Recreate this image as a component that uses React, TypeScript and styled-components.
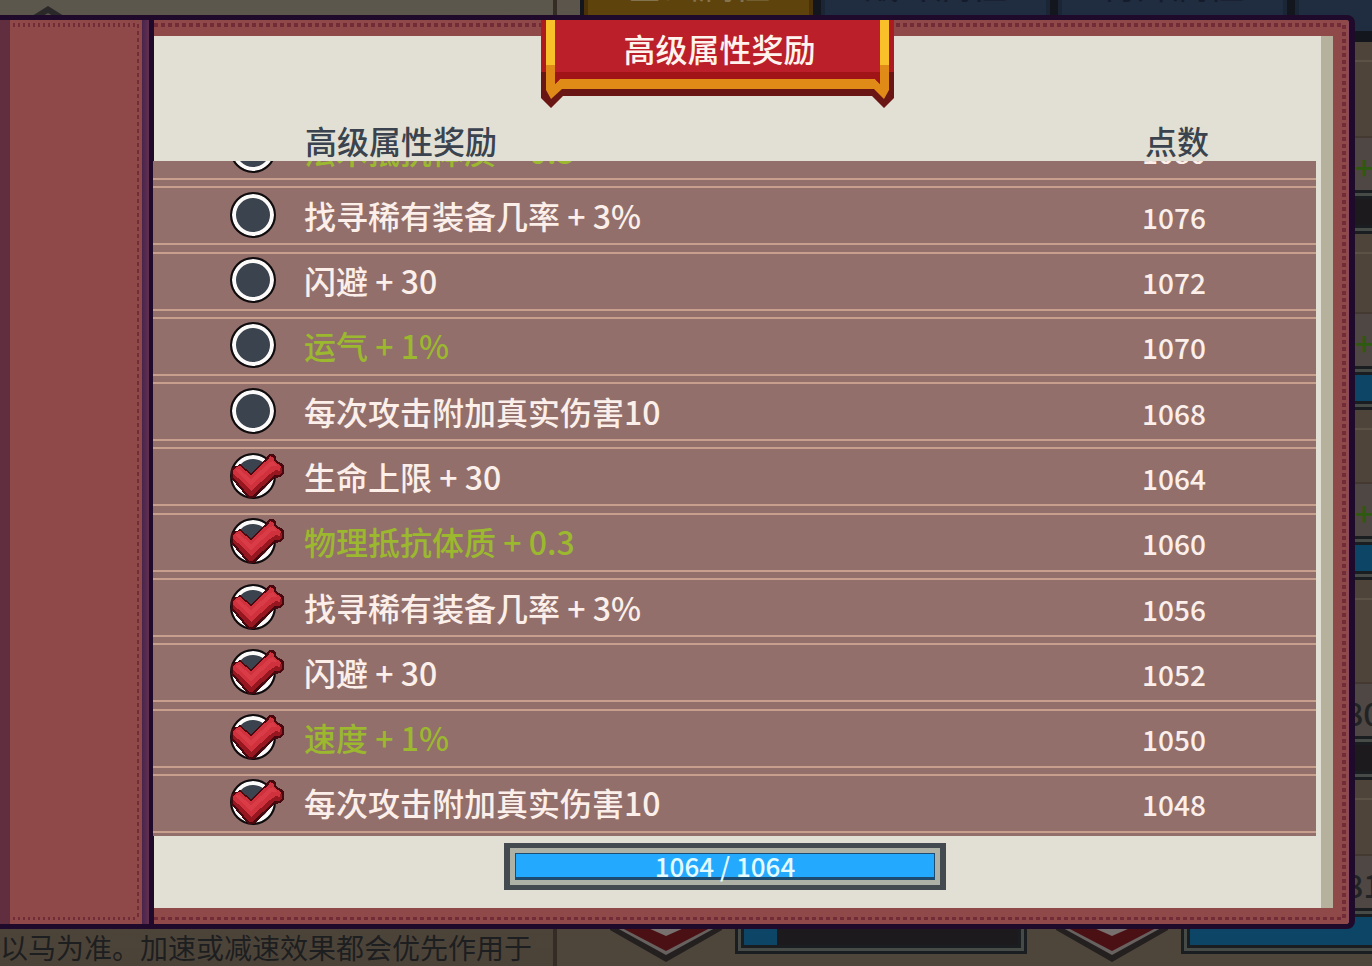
import React from "react";
import styled, { createGlobalStyle } from "styled-components";

const GlobalStyle = createGlobalStyle`
  *, *::before, *::after { box-sizing: border-box; }
  body {
    margin: 0;
    background: #4d443a;
    font-family: "Noto Sans CJK SC", "Noto Sans", sans-serif;
  }
  button { font-family: inherit; }
`;

const ink = "#1f0a2b";
const brick = "#8f4949";
const stitch = "#712c38";
const paper = "#e2e0d4";
const slate = "#3a434e";

/* ---------- dimmed screen behind the book ---------- */

const Root = styled.div`
  position: relative;
  min-height: 100vh;
  overflow: hidden;
`;

const Scene = styled.div`
  position: absolute;
  inset: 0;
  display: grid;
  grid-template-columns: 557px 1fr;
  overflow: hidden;
`;

const NotesPanel = styled.section`
  display: flex;
  flex-direction: column;
  justify-content: space-between;
  border-right: 4px solid #352c26;
  background: linear-gradient(#5c574d, #4c4338);
`;

const NotesArrow = styled.svg`
  display: block;
  margin: 6px 0 0 32px;
`;

const NotesText = styled.p`
  margin: 0;
  font-size: 28px;
  line-height: 38px;
  color: #1d1e20;
  white-space: nowrap;
`;

const StatsPanel = styled.section`
  display: flex;
  flex-direction: column;
  min-width: 0;
  background: #4f463b;
`;

const TabBar = styled.nav`
  display: flex;
  gap: 8px;
  height: 42px;
  padding: 0 0 11px 27px;
  background: #14161d;
  box-shadow: inset 23px 0 #5b554b;
`;

const Tab = styled.button<{ $active?: boolean }>`
  display: flex;
  align-items: flex-end;
  justify-content: center;
  flex: 0 0 229px;
  height: 31px;
  padding: 0 0 26px;
  border: 0;
  background: ${(p) => (p.$active ? "#5e430c" : "#202c3f")};
  color: ${(p) => (p.$active ? "#83744f" : "#151b2b")};
  font-size: 36px;
  line-height: 44px;
  box-shadow: inset 4px 0 ${(p) => (p.$active ? "#4c3209" : "#1a2535")},
    inset -4px 0 ${(p) => (p.$active ? "#4c3209" : "#1a2535")};
`;

const StatCard = styled.div<{ $gap: number }>`
  display: flex;
  flex-direction: column;
  flex: none;
  margin-right: -40px;
  padding-top: ${(p) => p.$gap}px;
  background: linear-gradient(#5d5246, #5d5246) 0 18px / 100% 2px no-repeat, #4f443a;
`;

const StatValue = styled.div`
  display: flex;
  justify-content: flex-end;
  height: 54px;
  overflow: hidden;
  border-top: 2px solid #443a32;
  background: #4f4743;
`;

const StatNumber = styled.span<{ $bonus?: boolean }>`
  width: ${(p) => (p.$bonus ? 57 : 67)}px;
  color: ${(p) => (p.$bonus ? "#2d5a10" : "#222324")};
  font-size: 32px;
  font-weight: 500;
  line-height: 56px;
  white-space: nowrap;
`;

const Meter = styled.div<{ $wide?: boolean }>`
  flex: ${(p) => (p.$wide ? "none" : "0 0 292px")};
  height: ${(p) => (p.$wide ? 44 : 46)}px;
  padding: 3px;
  border: 3px solid #1b1e20;
  background: #464b48;
`;

const MeterTrack = styled.div`
  height: 100%;
  border: 3px solid #1b1e20;
  background: #1c1a1c;
`;

const MeterFill = styled.div`
  height: 100%;
  background: #0d4567;
`;

const MeterRow = styled.div`
  display: flex;
  align-items: flex-start;
  padding-left: 53px;
`;

const MeterPair = styled.div`
  display: flex;
  flex: none;
  gap: 13px;
  margin-right: 29px;
`;

/* ---------- book ---------- */

const Book = styled.main`
  position: relative;
  display: flex;
  margin: 15px 17px 37px 0;
  border: solid ${ink};
  border-width: 5px 6px 5px 0;
  border-radius: 0 8px 8px 0;
  background: ${brick};
`;

const Spine = styled.div`
  flex: 0 0 154px;
  border-right: 5px solid ${ink};
  padding-right: 7px;
  background: linear-gradient(90deg, #49244c, #623050) right / 7px 100% no-repeat;
`;

const SpineCover = styled.div`
  height: 100%;
  border-left: 10px solid #612e40;
  background:
    repeating-linear-gradient(90deg, ${stitch} 0 2px, transparent 2px 5px) 3px 3px / 124px 4px no-repeat,
    repeating-linear-gradient(90deg, ${stitch} 0 2px, transparent 2px 5px) 3px calc(100% - 4px) / 124px 3px no-repeat,
    repeating-linear-gradient(${stitch} 0 4px, transparent 4px 7px) 127px 4px / 2px calc(100% - 8px) no-repeat,
    ${brick};
`;

const Cover = styled.div`
  flex: 1;
  min-width: 0;
  padding: 16px 16px 16px 0;
  border-radius: 0 4px 4px 0;
  background:
    repeating-linear-gradient(90deg, ${stitch} 0 4px, transparent 4px 7px) 0 3px / calc(100% - 6px) 4px no-repeat,
    repeating-linear-gradient(90deg, ${stitch} 0 4px, transparent 4px 7px) 0 calc(100% - 4px) / calc(100% - 6px) 3px no-repeat,
    repeating-linear-gradient(${stitch} 0 4px, transparent 4px 7px) calc(100% - 3px) 5px / 4px calc(100% - 10px) no-repeat,
    linear-gradient(#8b4a62, #8b4a62) right / 2px 100% no-repeat,
    ${brick};
`;

const Page = styled.div`
  border-right: 12px solid #b6b19c;
  padding-right: 5px;
  background: ${paper};
`;

const Banner = styled.header`
  position: absolute;
  top: 0;
  left: 154px;
  right: 68px;
  display: flex;
  justify-content: center;
`;

const BannerPlate = styled.div`
  position: relative;
  width: 353px;
  height: 88px;
`;

const BannerArt = styled.svg`
  position: absolute;
  inset: 0;
`;

const BannerTitle = styled.h1`
  position: relative;
  margin: 0;
  padding-left: 4px;
  text-align: center;
  color: #fff3ee;
  font-size: 32px;
  font-weight: 500;
  line-height: 56px;
`;

const RewardTable = styled.table`
  display: block;
  width: 100%;
  border-collapse: collapse;
`;

const TableHead = styled.thead`
  display: block;
  padding-top: 84px;
`;

const HeadRow = styled.tr`
  display: grid;
  grid-template-columns: 1fr 64px;
  padding: 0 107px 0 151px;
`;

const HeadCell = styled.th`
  padding: 0;
  text-align: left;
  color: ${slate};
  font-size: 32px;
  font-weight: 500;
  line-height: 41px;
`;

/* The list is scrolled: its first row is clipped at the header's lower edge. */
const RewardList = styled.tbody`
  display: grid;
  grid-auto-rows: 59px;
  align-content: space-between;
  height: 715px;
  margin: -40px 0 0 -1px;
  padding-bottom: 3px;
  clip-path: inset(40px 0 0);
  background: #926f6a;
`;

const RewardRow = styled.tr`
  display: grid;
  grid-template-columns: 54px 1fr 64px;
  column-gap: 21px;
  align-items: center;
  padding: 0 110px 2px 76px;
  border: solid #c79f8c;
  border-width: 2px 0;
`;

const MarkCell = styled.td`
  position: relative;
  height: 48px;
  padding: 1px;
`;

const Mark = styled.input`
  display: block;
  appearance: none;
  width: 46px;
  height: 46px;
  margin: 0;
  border: 2px solid #100c0e;
  border-radius: 50%;
  background: ${slate};
  box-shadow: inset 0 0 0 4px #fdfbf9;
`;

const Tick = styled.svg`
  position: absolute;
  top: 0;
  left: 0;
`;

const RewardCell = styled.td<{ $rare?: boolean }>`
  padding: 0;
  color: ${(p) => (p.$rare ? "#9bb82f" : "#fcefea")};
  font-size: 32px;
  font-weight: 500;
  line-height: 48px;
  white-space: nowrap;
`;

const PointsCell = styled.td`
  padding: 4px 0 0;
  text-align: center;
  color: #fcefea;
  font-size: 28px;
  font-weight: 500;
  line-height: 44px;
`;

const PageFoot = styled.footer`
  display: flex;
  justify-content: center;
  padding: 7px 20px 18px 0;
`;

const Progress = styled.div`
  flex: 0 1 442px;
  height: 47px;
  padding: 5px;
  border: solid #444b50;
  border-width: 5px 6px;
  background: #aeb1a5;
`;

const ProgressTrack = styled.div`
  position: relative;
  height: 27px;
  border: 1px solid #1d4c70;
  border-bottom-width: 3px;
  background: #24404f;
`;

const ProgressFill = styled.div`
  height: 100%;
  background: #23a9fe;
`;

const ProgressText = styled.div`
  position: absolute;
  inset: 0;
  text-align: center;
  color: #e4fbff;
  font-size: 26px;
  font-weight: 500;
  line-height: 23px;
`;

type Reward = { name: string; points: number; rare?: boolean };

const rewards: Reward[] = [
  { name: "法术抵抗体质 + 0.3", points: 1080, rare: true },
  { name: "找寻稀有装备几率 + 3%", points: 1076 },
  { name: "闪避 + 30", points: 1072 },
  { name: "运气 + 1%", points: 1070, rare: true },
  { name: "每次攻击附加真实伤害10", points: 1068 },
  { name: "生命上限 + 30", points: 1064 },
  { name: "物理抵抗体质 + 0.3", points: 1060, rare: true },
  { name: "找寻稀有装备几率 + 3%", points: 1056 },
  { name: "闪避 + 30", points: 1052 },
  { name: "速度 + 1%", points: 1050, rare: true },
  { name: "每次攻击附加真实伤害10", points: 1048 },
];

const current = 1064;
const goal = 1064;

const stats = [
  { gap: 94, value: "+", bonus: true, fill: 0 },
  { gap: 78, value: "+", bonus: true, fill: 100 },
  { gap: 72, value: "+", bonus: true, fill: 100 },
  { gap: 102, value: "80", bonus: false, fill: 0 },
  { gap: 74, value: "81", bonus: false, fill: 100 },
];

function Shield() {
  return (
    <svg width="112" height="54" viewBox="0 0 112 54" aria-hidden="true">
      <path d="M0 0H112V22L56 54L0 22Z" fill="#24201f" />
      <path d="M7 0H105V20L56 47L7 20Z" fill="#67615f" />
      <path d="M12 0H100V20L56 43L12 20Z" fill="#4b1013" />
      <path d="M38 0H74V20L56 28L38 20Z" fill="#77706e" />
    </svg>
  );
}

function CheckMark() {
  return (
    <Tick width="56" height="48" viewBox="0 0 56 48" shapeRendering="crispEdges" aria-hidden="true">
      <path
        d="M2 18L5 14H8L11 12L22 21L30 13L37 6L40 2H44L47 5V8L52 11L55 14V21L52 25L46 26L41 30L34 37L25 46H19L13 39L7 32L2 26Z"
        fill="#48080f"
      />
      <path d="M4 19L8 16L22 27L41 9L49 13L53 16V20L50 23H45L34 34L23 44H20L10 32L4 26Z" fill="#961720" />
      <path d="M4 18L7 15L11 14L22 23L32 13L39 8L41 4L45 6V9L52 14L51 19L47 18L41 22L22 39L14 30L4 22Z" fill="#cf323d" />
      <path d="M7 17H10L22 27L41 10L44 9L48 14L43 14L22 33L8 20Z" fill="#d93c46" />
    </Tick>
  );
}

export default function App() {
  return (
    <Root>
      <GlobalStyle />
      <Scene>
        <NotesPanel>
          <NotesArrow width="32" height="10" viewBox="0 0 32 10" aria-hidden="true">
            <path d="M0 10L16 0L32 10Z" fill="#2b2829" />
            <path d="M11 10L16 7L21 10Z" fill="#57534b" />
          </NotesArrow>
          <NotesText>以马为准。加速或减速效果都会优先作用于</NotesText>
        </NotesPanel>
        <StatsPanel>
          <TabBar>
            <Tab $active>基础属性</Tab>
            <Tab>战斗属性</Tab>
            <Tab>特殊属性</Tab>
            <Tab>属性</Tab>
          </TabBar>
          {stats.map((s, i) => (
            <StatCard key={i} $gap={s.gap}>
              <StatValue>
                <StatNumber $bonus={s.bonus}>{s.value}</StatNumber>
              </StatValue>
              {i < stats.length - 1 && (
                <Meter $wide>
                  <MeterTrack>
                    <MeterFill style={{ width: `${s.fill}%` }} />
                  </MeterTrack>
                </Meter>
              )}
            </StatCard>
          ))}
          <MeterRow>
            {[12, 100].map((fill) => (
              <MeterPair key={fill}>
                <Shield />
                <Meter>
                  <MeterTrack>
                    <MeterFill style={{ width: `${fill}%` }} />
                  </MeterTrack>
                </Meter>
              </MeterPair>
            ))}
          </MeterRow>
        </StatsPanel>
      </Scene>

      <Book>
        <Spine>
          <SpineCover />
        </Spine>
        <Cover>
          <Page>
            <RewardTable>
              <TableHead>
                <HeadRow>
                  <HeadCell scope="col">高级属性奖励</HeadCell>
                  <HeadCell scope="col">点数</HeadCell>
                </HeadRow>
              </TableHead>
              <RewardList>
                {rewards.map((r) => (
                  <RewardRow key={r.points}>
                    <MarkCell>
                      <Mark type="checkbox" id={`reward-${r.points}`} checked={r.points <= current} readOnly />
                      {r.points <= current && <CheckMark />}
                    </MarkCell>
                    <RewardCell $rare={r.rare}>
                      <label htmlFor={`reward-${r.points}`}>{r.name}</label>
                    </RewardCell>
                    <PointsCell>{r.points}</PointsCell>
                  </RewardRow>
                ))}
              </RewardList>
            </RewardTable>
            <PageFoot>
              <Progress role="progressbar" aria-label="点数" aria-valuenow={current} aria-valuemax={goal}>
                <ProgressTrack>
                  <ProgressFill style={{ width: `${(current / goal) * 100}%` }} />
                  <ProgressText>
                    {current} / {goal}
                  </ProgressText>
                </ProgressTrack>
              </Progress>
            </PageFoot>
          </Page>
        </Cover>
        <Banner>
          <BannerPlate>
            <BannerArt width="353" height="88" viewBox="0 0 353 88" aria-hidden="true">
              <path d="M0 0H353V78L343 88L331 76H22L10 88L0 78Z" fill="#6a1614" />
              <path d="M0 0H353V52H0Z" fill="#ad1a20" />
              <path d="M14 0H339V60H14Z" fill="#a01418" />
              <path d="M14 0H339V52H14Z" fill="#bb1f29" />
              <path d="M5 0H14V64L19 59H334L339 64V0H348V70L343 79L333 69H21L10 79L5 70Z" fill="#e08a18" />
              <path d="M5 0H14V45H5ZM339 0H348V45H339Z" fill="#fac02a" />
              <path d="M14 52V64L19 59V52ZM339 52V64L334 59V52Z" fill="#a01418" />
            </BannerArt>
            <BannerTitle>高级属性奖励</BannerTitle>
          </BannerPlate>
        </Banner>
      </Book>
    </Root>
  );
}
